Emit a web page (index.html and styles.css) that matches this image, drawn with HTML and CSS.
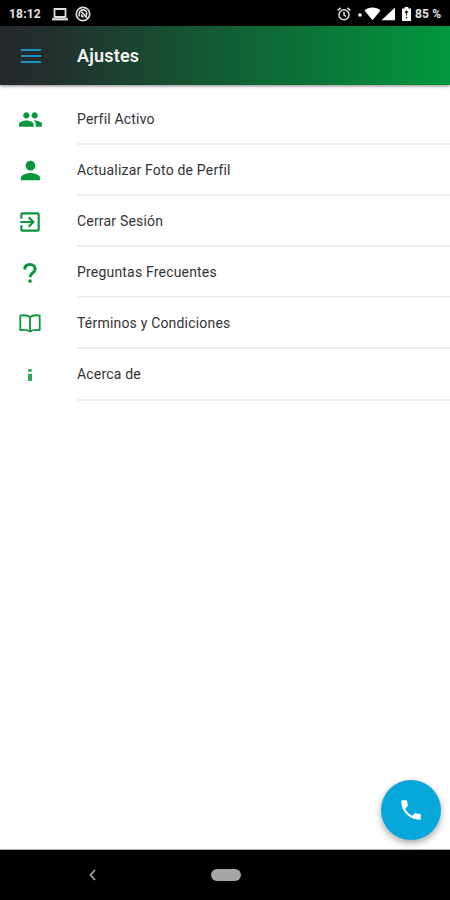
FILE: index.html
```
<!DOCTYPE html>
<html lang="es">
<head>
<meta charset="utf-8">
<title>Ajustes</title>
<link rel="stylesheet" href="styles.css">
</head>
<body>
<div class="status">
  <span class="time">18:12</span>
  <svg class="laptop" width="16" height="14" viewBox="0 0 16 14" fill="none" stroke="#ddd"><path d="M2.500 2h11v8h-11z" stroke-width="1.800"/><path d="M0 12.300h16" stroke-width="2.200"/></svg>
  <svg class="cast" width="16" height="16" viewBox="0 0 16 16" fill="none" stroke="#ddd" stroke-width="1.700"><circle cx="8" cy="8" r="6.700"/><path d="M4.300 10.500V7.500a3.700 3.700 0 0 1 7.400 0c0 1.300-.6 2.300-1.500 3"/><path d="M6.300 5.700l6 6.500"/><path d="M6.500 8.500v2.500h2z" fill="#ddd" stroke-width="1"/></svg>
  <svg class="alarm" width="14" height="14" viewBox="0 0 14 14" fill="none" stroke="#ddd" stroke-width="1.500"><circle cx="7" cy="7.700" r="5"/><path d="M.700 3.300L3.700.900M13.300 3.300L10.300.900M7 4.700v3.300l2.200 1.500"/></svg>
  <svg class="signal" width="42" height="14" viewBox="0 0 42 14" fill="#fff"><circle cx="2" cy="8" r="1.800"/><path d="M6.500 3.400C11-.3 18-.3 22.500 3.400L14.500 13.200z"/><path d="M37 .500v12.700H23.500z"/></svg>
  <svg class="battery" width="9" height="14" viewBox="0 0 9 14"><path d="M2.700 0h3.600v1.500H9V14H0V1.500h2.700z" fill="#fff"/><path d="M4.500 4v4.500M4.500 10v1.500M3 5.500L4.500 4 6 5.500" stroke="#222" stroke-width="1.200" fill="none"/></svg>
  <span class="pct">85 %</span>
</div>
<header class="bar">
  <svg class="menu" width="20" height="14" viewBox="0 0 20 14" stroke="#1b93bd" stroke-width="2"><path d="M0 1h20M0 7h20M0 13h20"/></svg>
  <h1>Ajustes</h1>
</header>
<main class="content">
  <ul class="list">
    <li><span class="icon"><svg width="25" height="25" viewBox="0 0 24 24"><path d="M16 11c1.660 0 2.990-1.340 2.990-3S17.660 5 16 5s-3 1.340-3 3 1.340 3 3 3zm-8 0c1.660 0 2.990-1.340 2.990-3S9.660 5 8 5 5 6.340 5 8s1.340 3 3 3zm0 2c-2.330 0-7 1.170-7 3.500V19h14v-2.500C15 14.170 10.330 13 8 13zm8 0c-.290 0-.620.020-.970.050 1.160.840 1.970 1.970 1.970 3.450V19h6v-2.500c0-2.330-4.670-3.500-7-3.500z"/></svg></span><span class="label">Perfil Activo</span></li>
    <li><span class="icon"><svg width="29" height="29" viewBox="0 0 24 24"><path d="M12 12c2.210 0 4-1.790 4-4s-1.790-4-4-4-4 1.790-4 4 1.790 4 4 4zm0 2c-2.670 0-8 1.340-8 4v2h16v-2c0-2.660-5.330-4-8-4z"/></svg></span><span class="label">Actualizar Foto de Perfil</span></li>
    <li><span class="icon"><svg width="26" height="26" viewBox="0 0 24 24"><path d="M10.090 15.590L11.500 17l5-5-5-5-1.410 1.410L12.670 11H3v2h9.670l-2.580 2.590zM19 3H5a2 2 0 0 0-2 2v4h2V5h14v14H5v-4H3v4a2 2 0 0 0 2 2h14c1.100 0 2-.900 2-2V5c0-1.100-.900-2-2-2z"/></svg></span><span class="label">Cerrar Sesión</span></li>
    <li><span class="icon"><svg width="14" height="20" viewBox="0 0 14 20"><path d="M1.800 6.500C1.800 3.300 4 1.600 7 1.600s5.200 1.800 5.200 4.500c0 3.700-5.200 4-5.200 8.100" fill="none" stroke="#0a963c" stroke-width="3"/><path d="M5.400 16.500h3.200v3.200H5.400z"/></svg></span><span class="label">Preguntas Frecuentes</span></li>
    <li><span class="icon"><svg class="book" width="22" height="19" viewBox="0 0 22 19"><path d="M11 3C8.500 1.200 5 .900 1.300 1.600v14.500c3.700-.500 7.200-.300 9.700 1.300 2.500-1.600 6-1.800 9.700-1.300V1.600C17 .900 13.500 1.200 11 3zM11 3v14" fill="none" stroke="#0a963c" stroke-width="1.800" stroke-linejoin="round"/></svg></span><span class="label">Términos y Condiciones</span></li>
    <li><span class="icon"><svg width="4" height="12" viewBox="0 0 4 12" opacity=".85"><path d="M.3 0h3.400v2.800H.3zM0 4.800h4V12H0z"/></svg></span><span class="label">Acerca de</span></li>
  </ul>
  <button class="fab" aria-label="Llamar"><svg width="26" height="26" viewBox="0 0 24 24" fill="#fff"><path d="M6.620 10.790c1.440 2.830 3.760 5.140 6.590 6.590l2.200-2.200c.270-.270.670-.360 1.020-.240 1.120.370 2.330.570 3.570.570.550 0 1 .450 1 1V20c0 .550-.450 1-1 1C10.610 21 3 13.390 3 4c0-.550.450-1 1-1h3.500c.550 0 1 .450 1 1 0 1.250.200 2.450.570 3.570.110.350.030.740-.250 1.020z"/></svg></button>
</main>
<nav class="nav">
  <svg class="back" width="7" height="12" viewBox="0 0 7 12" fill="none" stroke="#aaa" stroke-width="1.700"><path d="M6 1L1.500 6 6 11"/></svg>
  <span class="pill"></span>
</nav>
</body>
</html>
```
FILE: styles.css
```
* { box-sizing: border-box; }
body {
  margin: 0;
  width: 450px;
  height: 900px;
  display: flex;
  flex-direction: column;
  overflow: hidden;
  background: #fff;
  font-family: Roboto, "Liberation Sans", sans-serif;
}
.status {
  height: 26px;
  flex: none;
  display: flex;
  align-items: center;
  padding: 1px 8px 0 9px;
  background: #000;
  color: #e4e4e4;
  font-size: 12px;
  font-weight: 700;
  letter-spacing: .2px;
  white-space: nowrap;
}
.time { width: 32px; }
.status svg { flex: none; }
.laptop { margin-left: 11px; }
.cast { margin-left: 7px; }
.alarm { margin-left: auto; }
.signal { margin-left: 7px; }
.battery { margin-left: 2px; }
.pct { margin-left: 4px; width: 27px; }
.bar {
  height: 59px;
  flex: none;
  display: flex;
  align-items: center;
  padding-left: 21px;
  background: linear-gradient(90deg, #25282c 0%, #222e2d 10%, #00983e 100%);
  box-shadow: 0 1px 3px rgba(0, 0, 0, .5);
  z-index: 1;
}
.bar h1 {
  margin: 0 0 0 36px;
  color: #f4f7f5;
  font-size: 18px;
  font-weight: 600;
  letter-spacing: .2px;
  line-height: 24px;
}
.content {
  flex: 1;
  position: relative;
  border-bottom: 1px solid #aaa;
}
.list {
  margin: 0;
  padding: 9px 0 0;
  list-style: none;
}
.list li {
  height: 51.1px;
  display: flex;
}
.icon {
  width: 77px;
  height: 51px;
  padding-right: 17px;
  display: flex;
  align-items: center;
  justify-content: center;
  fill: #0a963c;
}
.label {
  flex: 1;
  border-bottom: 2px solid #ededed;
  color: #333;
  font-size: 14px;
  letter-spacing: .19px;
  line-height: 50px;
}
.fab {
  position: absolute;
  right: 9px;
  bottom: 9px;
  width: 60px;
  height: 60px;
  padding: 0;
  display: flex;
  align-items: center;
  justify-content: center;
  border: 0;
  border-radius: 50%;
  background: #06a8dc;
  box-shadow: 0 3px 7px rgba(0, 0, 0, .35);
}
.nav {
  height: 50px;
  flex: none;
  display: flex;
  align-items: center;
  padding-left: 89px;
  background: #000;
}
.pill {
  width: 30px;
  height: 12px;
  margin-left: 115px;
  border-radius: 6px;
  background: #a6a6a6;
}
```
